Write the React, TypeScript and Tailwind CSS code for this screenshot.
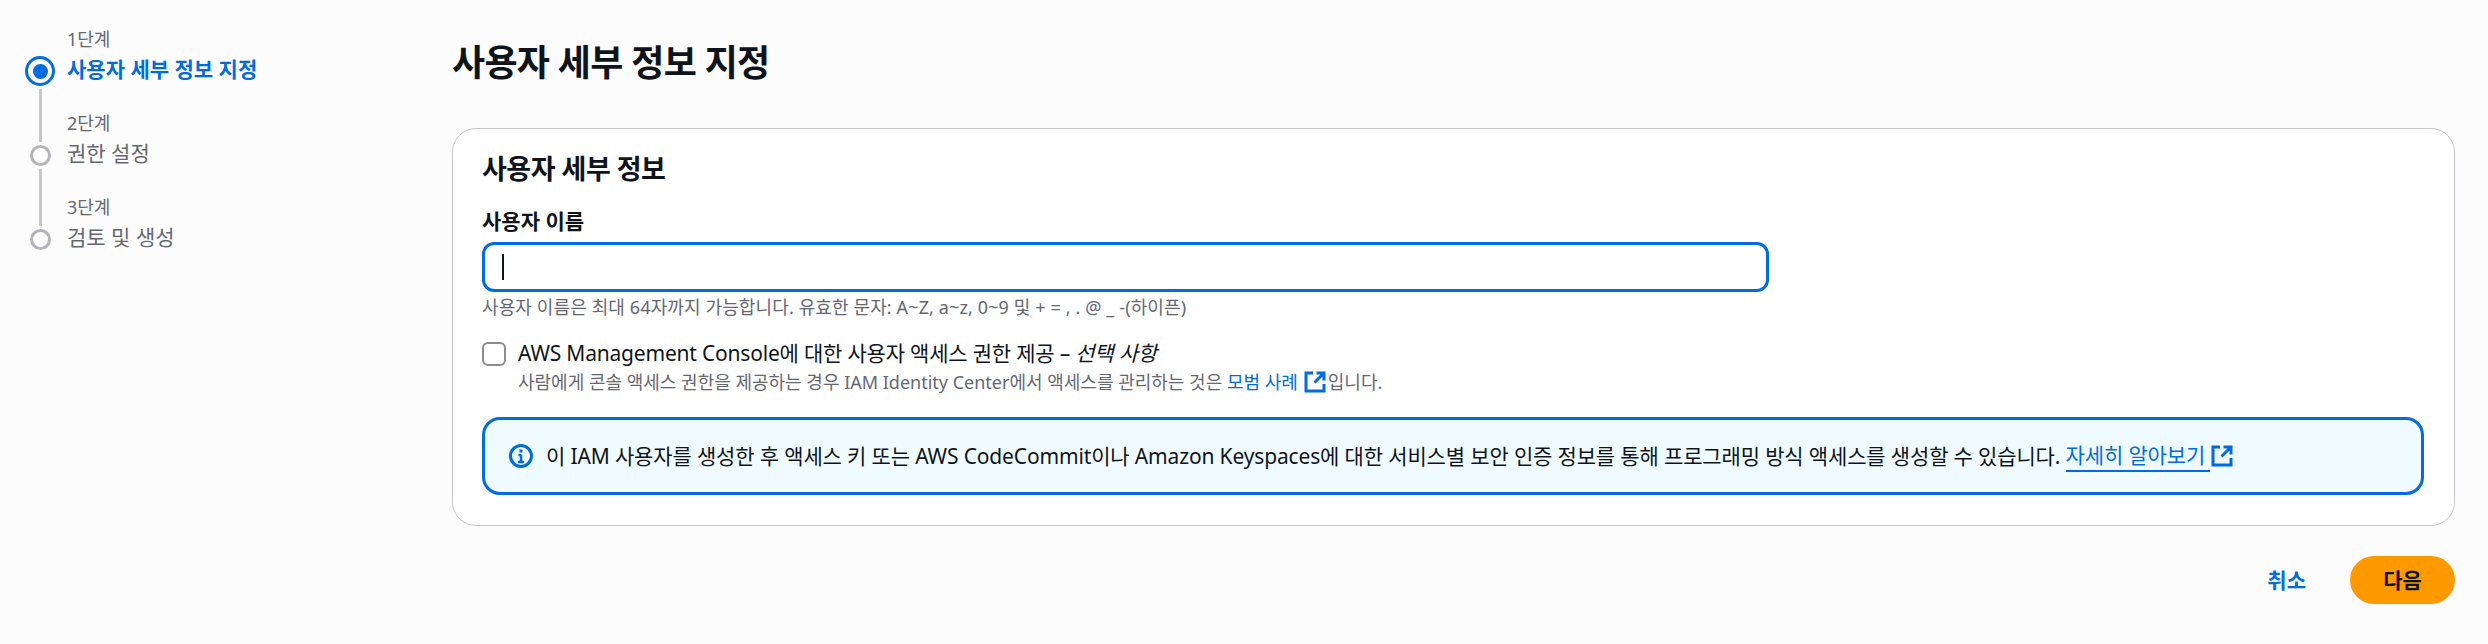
const F = "[font-family:'Noto_Sans','Noto_Sans_CJK_KR',sans-serif]";

function ExternalIcon() {
  return (
    <svg width="22" height="22" viewBox="0 0 22 22" fill="none" stroke="#006ce0" strokeWidth="3" className="shrink-0">
      <path d="M9 2H2v18h18v-7" />
      <path d="M12.5 2H20v7.5M19.5 2.5l-9 9" />
    </svg>
  );
}

function Step({ n, title, active, circleTop, lineTop, lineH }: { n: string; title: string; active?: boolean; circleTop: string; lineTop?: string; lineH?: string }) {
  return (
    <div className="flex h-[84px] w-full">
      <div className="relative w-[67px]">
        {active ? (
          <div className={`absolute left-[25px] ${circleTop} flex h-[30px] w-[30px] items-center justify-center rounded-full border-[3px] border-[#006ce0] bg-white`}>
            <div className="h-[15px] w-[15px] rounded-full bg-[#006ce0]" />
          </div>
        ) : (
          <div className={`absolute left-[30px] ${circleTop} h-[21px] w-[21px] rounded-full border-[3px] border-[#b4b4bb] bg-white`} />
        )}
        {lineTop && <div className={`absolute left-[39px] ${lineTop} ${lineH} w-[3px] bg-[#c6c6cd]`} />}
      </div>
      <div className="flex flex-col">
        <div className="h-[27px] text-[18px] leading-[27px] text-[#656871]">{n}</div>
        <div className={`h-[32px] text-[21px] leading-[32px] ${active ? "font-bold text-[#006ce0]" : "text-[#656871]"}`}>{title}</div>
      </div>
    </div>
  );
}

export default function App() {
  return (
    <div className={`flex h-[644px] w-[2488px] overflow-hidden bg-[#fcfcfd] ${F}`}>
      <aside className="flex w-[451.5px] shrink-0 flex-col pt-[26px]">
        <Step n="1단계" title="사용자 세부 정보 지정" active circleTop="top-[30px]" lineTop="top-[63px]" lineH="h-[53px]" />
        <Step n="2단계" title="권한 설정" circleTop="top-[35px]" lineTop="top-[59px]" lineH="h-[57px]" />
        <Step n="3단계" title="검토 및 생성" circleTop="top-[35px]" />
      </aside>
      <main className="flex w-[2003.5px] shrink-0 flex-col">
        <h1 className="mt-[38px] h-[50px] pl-[0.5px] text-[36px] font-bold leading-[50px] tracking-[-0.72px] text-[#0f141a]">사용자 세부 정보 지정</h1>
        <section className="mt-[40px] flex h-[398px] flex-col rounded-[24px] border-[1.5px] border-[#c6c6cd] bg-white pl-[29.5px] pr-[30px]">
          <h2 className="mt-[20px] h-[40px] text-[27px] font-bold leading-[40px] tracking-[-0.5px] text-[#0f141a]">사용자 세부 정보</h2>
          <label className="mt-[16px] h-[32px] text-[21px] font-bold leading-[32px] text-[#0f141a]">사용자 이름</label>
          <div className="mt-[4.5px] flex h-[50px] w-[1287px] items-center rounded-[12px] border-[3px] border-[#006ce0] bg-white pl-[17px]">
            <div className="h-[26px] w-[2px] bg-[#0f141a]" />
          </div>
          <p className="mt-[2.5px] h-[27px] text-[18px] leading-[27px] tracking-[0.12px] text-[#656871]">
            사용자 이름은 최대 64자까지 가능합니다. 유효한 문자: A~Z, a~z, 0~9 및 + = , . @ _ -(하이픈)
          </p>
          <div className="mt-[15.5px] flex">
            <div className="mt-[5px] h-[24px] w-[24px] rounded-[6px] border-[2px] border-[#8c8c94] bg-white" />
            <div className="ml-[12px] flex flex-col">
              <div className="h-[32px] text-[21px] leading-[32px] tracking-[-0.2px] text-[#0f141a]">
                AWS Management Console에 대한 사용자 액세스 권한 제공 – <i>선택 사항</i>
              </div>
              <div className="flex h-[26px] items-center text-[18px] leading-[26px] text-[#656871]">
                <span>사람에게 콘솔 액세스 권한을 제공하는 경우 IAM Identity Center에서 액세스를 관리하는 것은 <span className="text-[#006ce0]">모범 사례</span></span>
                <span className="ml-[6px] mr-[2px]"><ExternalIcon /></span>
                <span>입니다.</span>
              </div>
            </div>
          </div>
          <div className="mt-[22.5px] flex h-[78px] items-center rounded-[18px] border-[3px] border-[#006ce0] bg-[#f0fbff] pl-[24px]">
            <svg width="24" height="24" viewBox="0 0 24 24" fill="none" className="shrink-0">
              <circle cx="12" cy="12" r="10.5" stroke="#006ce0" strokeWidth="3" />
              <path d="M12 10.5V18M9 18h6M9.5 11H12" stroke="#006ce0" strokeWidth="2.5" />
              <path d="M12 5.5v3" stroke="#006ce0" strokeWidth="3" />
            </svg>
            <p className="ml-[13px] flex items-center text-[21px] leading-[32px] tracking-[-0.15px] text-[#0f141a]">
              <span>이 IAM 사용자를 생성한 후 액세스 키 또는 AWS CodeCommit이나 Amazon Keyspaces에 대한 서비스별 보안 인증 정보를 통해 프로그래밍 방식 액세스를 생성할 수 있습니다.&nbsp;</span>
              <span className="border-b-[2px] border-[#006ce0] leading-[30px] text-[#006ce0]">자세히 알아보기&nbsp;</span>
              <span className="ml-[1px]"><ExternalIcon /></span>
            </p>
          </div>
        </section>
        <div className="mt-[30px] flex items-center justify-end">
          <button className="mr-[44px] text-[21px] font-bold leading-[32px] text-[#006ce0]">취소</button>
          <button className="h-[48px] w-[105px] rounded-full bg-[#ff9900] text-[21px] font-bold leading-[32px] text-[#0f141a]">다음</button>
        </div>
      </main>
    </div>
  );
}
